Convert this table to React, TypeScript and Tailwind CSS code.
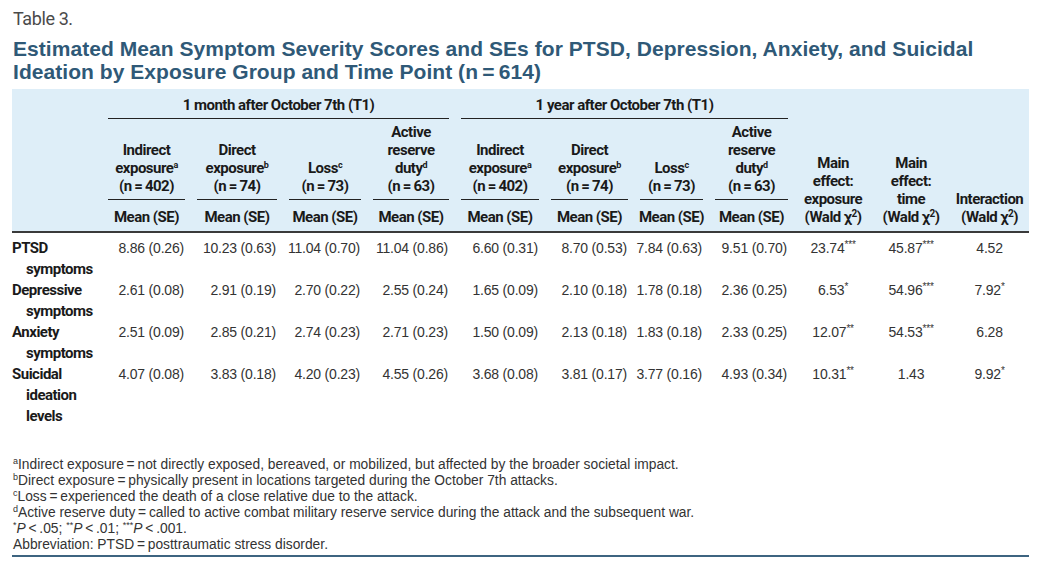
const cond = "font-['Roboto','Liberation_Sans',sans-serif] tracking-[-0.5px]";

const groups = [
  { name: "Indirect exposure", lines: ["Indirect", "exposure"], sup: "a", n: "402" },
  { name: "Direct exposure", lines: ["Direct", "exposure"], sup: "b", n: "74" },
  { name: "Loss", lines: ["Loss"], sup: "c", n: "73" },
  { name: "Active reserve duty", lines: ["Active", "reserve", "duty"], sup: "d", n: "63" },
];

const rows = [
  {
    label: "PTSD symptoms",
    values: ["8.86 (0.26)", "10.23 (0.63)", "11.04 (0.70)", "11.04 (0.86)", "6.60 (0.31)", "8.70 (0.53)", "7.84 (0.63)", "9.51 (0.70)"],
    effects: [["23.74", "***"], ["45.87", "***"], ["4.52", ""]],
  },
  {
    label: "Depressive symptoms",
    values: ["2.61 (0.08)", "2.91 (0.19)", "2.70 (0.22)", "2.55 (0.24)", "1.65 (0.09)", "2.10 (0.18)", "1.78 (0.18)", "2.36 (0.25)"],
    effects: [["6.53", "*"], ["54.96", "***"], ["7.92", "*"]],
  },
  {
    label: "Anxiety symptoms",
    values: ["2.51 (0.09)", "2.85 (0.21)", "2.74 (0.23)", "2.71 (0.23)", "1.50 (0.09)", "2.13 (0.18)", "1.83 (0.18)", "2.33 (0.25)"],
    effects: [["12.07", "**"], ["54.53", "***"], ["6.28", ""]],
  },
  {
    label: "Suicidal ideation levels",
    values: ["4.07 (0.08)", "3.83 (0.18)", "4.20 (0.23)", "4.55 (0.26)", "3.68 (0.08)", "3.81 (0.17)", "3.77 (0.16)", "4.93 (0.34)"],
    effects: [["10.31", "**"], ["1.43", ""], ["9.92", "*"]],
  },
];

const Wald = () => (
  <>
    (Wald χ<sup className="text-[10px] -top-[5px]">2</sup>)
  </>
);

const GroupHeads = () => (
  <>
    {groups.map((g) => (
      <th key={g.name} className="px-[6px] align-bottom font-bold">
        <div className="border-b border-[#222] pt-[4px] pb-[4px] text-center">
          {g.lines.map((l, i) => (
            <div key={l}>
              {l}
              {i === g.lines.length - 1 && (
                <sup className="text-[9px] -top-[5px] font-bold">{g.sup}</sup>
              )}
            </div>
          ))}
          <div>(n{"\u2009=\u2009"}{g.n})</div>
        </div>
      </th>
    ))}
  </>
);

const MeanHeads = () => (
  <>
    {groups.map((g) => (
      <th key={g.name} className="px-[2px] pt-[8px] pb-[5px] text-center font-bold whitespace-nowrap">
        Mean (SE)
      </th>
    ))}
  </>
);

const Note = ({ m }: { m: string }) => <sup className="text-[9px] -top-[5px]">{m}</sup>;

export default function App() {
  return (
    <div className="bg-white w-[1042px] h-[569px] overflow-hidden px-[12px] pt-[9px] font-['Liberation_Sans',Arial,sans-serif] text-[#2b2b2b]">
      <div className="font-['Roboto',sans-serif] tracking-[-0.4px] text-[18px] leading-[20px] text-[#4a4a4a] pl-[1px]">Table 3.</div>
      <h2 className="mt-[8px] text-[21px] leading-[23px] font-bold text-[#2f5977] pl-[1px] whitespace-nowrap tracking-[0.05px]">
        Estimated Mean Symptom Severity Scores and SEs for PTSD, Depression, Anxiety, and Suicidal
        <br />
        Ideation by Exposure Group and Time Point (n{"\u2009=\u2009"}614)
      </h2>

      <table className="mt-[6px] w-[1017px] table-fixed border-collapse">
        <colgroup>
          <col className="w-[90px]" />
          <col className="w-[89px]" />
          <col className="w-[92px]" />
          <col className="w-[84px]" />
          <col className="w-[88px]" />
          <col className="w-[90px]" />
          <col className="w-[89px]" />
          <col className="w-[75px]" />
          <col className="w-[85px]" />
          <col className="w-[78px]" />
          <col className="w-[78px]" />
          <col className="w-[79px]" />
        </colgroup>
        <thead className={`bg-[#deeef8] ${cond} text-[15px] leading-[18px] text-[#1a1a1a]`}>
          <tr>
            <th rowSpan={3} className="border-b-2 border-[#3a3a3a]" />
            <th colSpan={4} className="px-[6px] font-bold">
              <div className="border-b border-[#222] pt-[7px] pb-[4px] text-center">1 month after October 7th (T1)</div>
            </th>
            <th colSpan={4} className="px-[6px] font-bold">
              <div className="border-b border-[#222] pt-[7px] pb-[4px] text-center">1 year after October 7th (T1)</div>
            </th>
            <th colSpan={3} />
          </tr>
          <tr>
            <GroupHeads />
            <GroupHeads />
            <th rowSpan={2} className="align-bottom px-[2px] pb-[5px] text-center font-bold border-b-2 border-[#3a3a3a]">
              <div>Main</div>
              <div>effect:</div>
              <div>exposure</div>
              <div className="whitespace-nowrap"><Wald /></div>
            </th>
            <th rowSpan={2} className="align-bottom px-[2px] pb-[5px] text-center font-bold border-b-2 border-[#3a3a3a]">
              <div>Main</div>
              <div>effect:</div>
              <div>time</div>
              <div className="whitespace-nowrap"><Wald /></div>
            </th>
            <th rowSpan={2} className="align-bottom px-[2px] pb-[5px] text-center font-bold border-b-2 border-[#3a3a3a]">
              <div>Interaction</div>
              <div className="whitespace-nowrap"><Wald /></div>
            </th>
          </tr>
          <tr className="border-b-2 border-[#3a3a3a]">
            <MeanHeads />
            <MeanHeads />
          </tr>
        </thead>
        <tbody className="text-[14px] leading-[21px] text-[#333] tracking-[-0.2px]">
          {rows.map((r, ri) => (
            <tr key={r.label} className={ri === 0 ? "[&>td]:pt-[5px]" : ""}>
              <td className={`${cond} align-top font-bold text-[15px] text-[#1a1a1a]`}>
                {r.label.split(" ").map((w, i) => (
                  <div key={w} className={i > 0 ? "pl-[14px]" : ""}>{w}</div>
                ))}
              </td>
              {r.values.map((v, i) => (
                <td key={i} className="align-top text-right pr-[7px] whitespace-nowrap">
                  {v}
                </td>
              ))}
              {r.effects.map(([v, s], i) => (
                <td key={i} className="align-top text-center whitespace-nowrap">
                  {v}
                  {s && <sup className="text-[10px] -top-[5px]">{s}</sup>}
                </td>
              ))}
            </tr>
          ))}
        </tbody>
      </table>

      <div className="mt-[30px] text-[13.8px] leading-[16px] text-[#333] pl-[1px] pb-[2px] border-b-2 border-[#3d6480] w-[1017px]">
        <div><Note m="a" />Indirect exposure{"\u2009=\u2009"}not directly exposed, bereaved, or mobilized, but affected by the broader societal impact.</div>
        <div><Note m="b" />Direct exposure{"\u2009=\u2009"}physically present in locations targeted during the October 7th attacks.</div>
        <div><Note m="c" />Loss{"\u2009=\u2009"}experienced the death of a close relative due to the attack.</div>
        <div><Note m="d" />Active reserve duty{"\u2009=\u2009"}called to active combat military reserve service during the attack and the subsequent war.</div>
        <div>
          <Note m="*" /><i>P</i>{"\u2009<\u2009"}.05;{" "}
          <Note m="**" /><i>P</i>{"\u2009<\u2009"}.01;{" "}
          <Note m="***" /><i>P</i>{"\u2009<\u2009"}.001.
        </div>
        <div>Abbreviation: PTSD{"\u2009=\u2009"}posttraumatic stress disorder.</div>
      </div>
    </div>
  );
}
